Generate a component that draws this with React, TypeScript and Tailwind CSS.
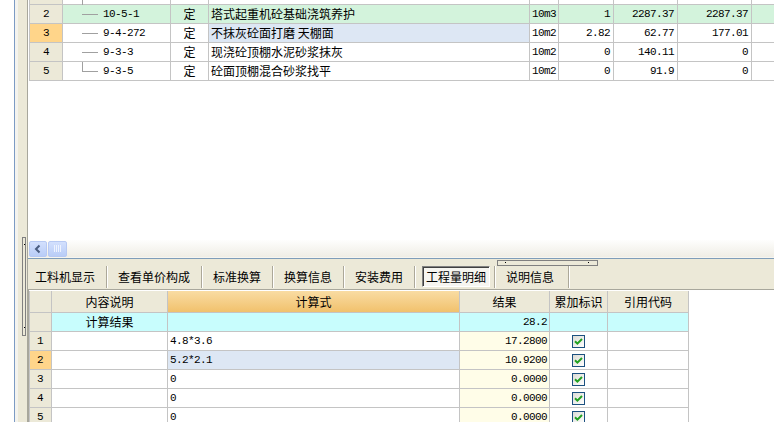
import React from 'react'

const cjk = "font-['Noto_Sans_CJK_SC','Noto_Sans',sans-serif]"
const mono = "font-['Liberation_Mono','DejaVu_Sans_Mono',monospace] text-[11px] tracking-[-0.6px]"

type TopRow = {
    no: string
    code: string
    name: string
    unit: string
    qty: string
    price: string
    total: string
    last?: boolean
}

const topRows: TopRow[] = [
    { no: '2', code: '10-5-1', name: '塔式起重机砼基础浇筑养护', unit: '10m3', qty: '1', price: '2287.37', total: '2287.37' },
    { no: '3', code: '9-4-272', name: '不抹灰砼面打磨 天棚面', unit: '10m2', qty: '2.82', price: '62.77', total: '177.01' },
    { no: '4', code: '9-3-3', name: '现浇砼顶棚水泥砂浆抹灰', unit: '10m2', qty: '0', price: '140.11', total: '0' },
    { no: '5', code: '9-3-5', name: '砼面顶棚混合砂浆找平', unit: '10m2', qty: '0', price: '91.9', total: '0', last: true },
]

const calcRows = [
    { no: '1', formula: '4.8*3.6', result: '17.2800' },
    { no: '2', formula: '5.2*2.1', result: '10.9200' },
    { no: '3', formula: '0', result: '0.0000' },
    { no: '4', formula: '0', result: '0.0000' },
    { no: '5', formula: '0', result: '0.0000' },
]

const tabs = ['工料机显示', '查看单价构成', '标准换算', '换算信息', '安装费用', '工程量明细', '说明信息']

const cell = 'h-full border-r border-[#c4c4c4] flex items-center shrink-0'

const CheckBox = () => (
    <span className="w-[13px] h-[13px] border border-[#1c5180] bg-gradient-to-br from-[#dcdcd6] to-white flex items-center justify-center">
        <svg width="9" height="9" viewBox="0 0 9 9">
            <path d="M1 4.2 L3.4 6.6 L8 2" stroke="#21a121" strokeWidth="2" fill="none" />
        </svg>
    </span>
)

const App = () => {
    return (
        <div className={`w-[774px] h-[422px] bg-white flex overflow-hidden relative text-black ${cjk} text-[12px]`}>
            {/* left frame strip */}
            <div className="w-[14px] h-full bg-white shrink-0" />
            <div className="w-px h-full bg-[#7c9bc4] shrink-0" />
            <div className="w-[3px] h-full bg-[#f4f3ee] shrink-0" />
            <div className="w-[9px] h-full bg-[#ece9d8] shrink-0" />
            <div className="w-px h-full bg-[#a8a79c] shrink-0" />

            <div className="flex-1 flex flex-col h-full">
                {/* upper grid */}
                <div className="h-[259px] shrink-0 flex flex-col border-b border-[#7f9db9] bg-white">
                    <div className="flex-1 overflow-hidden">
                        <div className="mt-[-14px] ml-px">
                            <div className="h-[19px] flex border-b border-[#c4c4c4]">
                                <div className={`${cell} w-[34px] border-l bg-[#ece9d8]`} />
                                <div className={`${cell} w-[108px] relative`}>
                                    <span className="absolute left-[19px] top-[9px] h-[10px] w-px bg-[#a0a0a0]" />
                                </div>
                                <div className={`${cell} w-[38px]`} />
                                <div className={`${cell} w-[321px]`} />
                                <div className={`${cell} w-[29px]`} />
                                <div className={`${cell} w-[55px]`} />
                                <div className={`${cell} w-[64px]`} />
                                <div className={`${cell} w-[74px]`} />
                                <div className={`${cell} w-[40px]`} />
                            </div>
                            {topRows.map((r, i) => {
                                const green = i === 0 ? 'bg-[#d3f3dc]' : ''
                                return (
                                    <div key={r.no} className={`h-[19px] flex border-b border-[#c4c4c4] ${green}`}>
                                        <div className={`${cell} w-[34px] border-l justify-center ${mono} ${i === 1 ? 'bg-[#ffd58a]' : 'bg-[#ece9d8]'}`}>
                                            {r.no}
                                        </div>
                                        <div className={`${cell} w-[108px] pl-[19px]`}>
                                            {r.last ? (
                                                <span className="w-[16px] h-[10px] self-start border-l border-b border-[#a0a0a0]" />
                                            ) : (
                                                <span className="w-[16px] h-px bg-[#a0a0a0]" />
                                            )}
                                            <span className={`ml-[5px] ${mono}`}>{r.code}</span>
                                        </div>
                                        <div className={`${cell} w-[38px] justify-center`}>定</div>
                                        <div className={`${cell} w-[321px] pl-[2px] ${i === 1 ? 'bg-[#dde7f4]' : ''}`}>{r.name}</div>
                                        <div className={`${cell} w-[29px] pl-[2px] ${mono}`}>{r.unit}</div>
                                        <div className={`${cell} w-[55px] justify-end pr-[3px] ${mono}`}>{r.qty}</div>
                                        <div className={`${cell} w-[64px] justify-end pr-[3px] ${mono}`}>{r.price}</div>
                                        <div className={`${cell} w-[74px] justify-end pr-[3px] ${mono}`}>{r.total}</div>
                                        <div className={`${cell} w-[40px]`} />
                                    </div>
                                )
                            })}
                        </div>
                    </div>
                    {/* horizontal scrollbar */}
                    <div className="h-[18px] shrink-0 flex items-center pl-px bg-gradient-to-b from-[#fefefd] to-[#efede5] border-b border-[#f6f5f0]">
                        <div className="w-[18px] h-[16px] rounded-[2px] border border-[#b7c9f3] bg-gradient-to-b from-[#d3e0fd] to-[#b9cdf7] flex items-center justify-center">
                            <svg width="8" height="10" viewBox="0 0 8 10">
                                <path d="M5.5 1.5 L2 5 L5.5 8.5" stroke="#4a5d80" strokeWidth="2" fill="none" />
                            </svg>
                        </div>
                        <div className="ml-px w-[19px] h-[16px] rounded-[2px] border border-[#b7c9f3] bg-gradient-to-b from-[#d3e0fd] to-[#b9cdf7] flex items-center justify-center gap-px">
                            <span className="w-px h-[7px] bg-[#eef3fe]" />
                            <span className="w-px h-[7px] bg-[#eef3fe]" />
                            <span className="w-px h-[7px] bg-[#eef3fe]" />
                            <span className="w-px h-[7px] bg-[#eef3fe]" />
                        </div>
                    </div>
                </div>

                {/* lower panel */}
                <div className="flex-1 min-h-0 overflow-hidden bg-[#ece9d8] flex flex-col">
                    <div className="h-[30px] shrink-0 flex items-end pl-[7px] pb-px">
                        {tabs.map((t, i) => {
                            const active = t === '工程量明细'
                            return (
                                <div key={t} className="flex items-end h-full">
                                    {active ? (
                                        <div className="h-[21px] mb-px px-[3px] border border-t-[#808080] border-l-[#808080] border-b-white border-r-white bg-[#f6f5f0] flex items-center -ml-[4px] mr-[-1px] shadow-[inset_1px_1px_0_#404040]">
                                            {t}
                                        </div>
                                    ) : (
                                        <div className="h-[22px] flex items-center">{t}</div>
                                    )}
                                    <span className={`${i === tabs.length - 1 ? 'ml-[14px]' : active ? 'ml-[5px]' : 'ml-[11px]'} w-[2px] h-[22px] border-l border-[#aca899] bg-white`} />
                                    <span className="w-[10px]" />
                                </div>
                            )
                        })}
                    </div>

                    {/* lower grid */}
                    <div className="flex-1 bg-white border-t border-l border-[#a8a79c] pt-px">
                        <div className="h-[22px] flex border-b border-[#c4c4c4] w-[660px]">
                            <div className={`${cell} w-[23px] border-l bg-[#ece9d8]`} />
                            <div className={`${cell} w-[116px] justify-center bg-[#ece9d8]`}>内容说明</div>
                            <div className={`${cell} w-[292px] justify-center bg-gradient-to-b from-[#f9dca2] to-[#f1c16c]`}>计算式</div>
                            <div className={`${cell} w-[90px] justify-center bg-[#ece9d8]`}>结果</div>
                            <div className={`${cell} w-[58px] justify-center bg-[#ece9d8]`}>累加标识</div>
                            <div className={`${cell} w-[81px] justify-center bg-[#ece9d8]`}>引用代码</div>
                        </div>
                        <div className="h-[19px] flex border-b border-[#c4c4c4] w-[660px]">
                            <div className={`${cell} w-[23px] border-l bg-[#ece9d8]`} />
                            <div className={`${cell} w-[116px] justify-center bg-[#c8fdfd]`}>计算结果</div>
                            <div className={`${cell} w-[292px] bg-[#c8fdfd]`} />
                            <div className={`${cell} w-[90px] justify-end pr-[2px] bg-[#c8fdfd] ${mono}`}>28.2</div>
                            <div className={`${cell} w-[58px] bg-[#c8fdfd]`} />
                            <div className={`${cell} w-[81px] bg-[#c8fdfd]`} />
                        </div>
                        {calcRows.map((r, i) => (
                            <div key={r.no} className="h-[19px] flex border-b border-[#c4c4c4] w-[660px]">
                                <div className={`${cell} w-[23px] border-l pl-[7px] ${mono} ${i === 1 ? 'bg-[#ffd58a]' : 'bg-[#ece9d8]'}`}>{r.no}</div>
                                <div className={`${cell} w-[116px]`} />
                                <div className={`${cell} w-[292px] pl-[2px] ${mono} ${i === 1 ? 'bg-[#dde7f4]' : ''}`}>{r.formula}</div>
                                <div className={`${cell} w-[90px] justify-end pr-[2px] bg-[#fffde8] ${mono}`}>{r.result}</div>
                                <div className={`${cell} w-[58px] justify-center`}>
                                    <CheckBox />
                                </div>
                                <div className={`${cell} w-[81px]`} />
                            </div>
                        ))}
                    </div>
                </div>
            </div>

            {/* splitter handles */}
            <div className="absolute left-[497px] top-[260px] w-[101px] h-[6px] border border-[#808080] bg-[#ece9d8]">
                <span className="absolute left-[7px] top-[1px] w-px h-px bg-black" />
                <span className="absolute right-[8px] top-[1px] w-px h-px bg-black" />
            </div>
            <div className="absolute left-[22px] top-[237px] w-[4px] h-[99px] border border-[#808080] bg-[#ece9d8]">
                <span className="absolute left-[1px] top-[6px] w-px h-px bg-black" />
                <span className="absolute left-[1px] bottom-[7px] w-px h-px bg-black" />
            </div>
        </div>
    )
}

export default App
